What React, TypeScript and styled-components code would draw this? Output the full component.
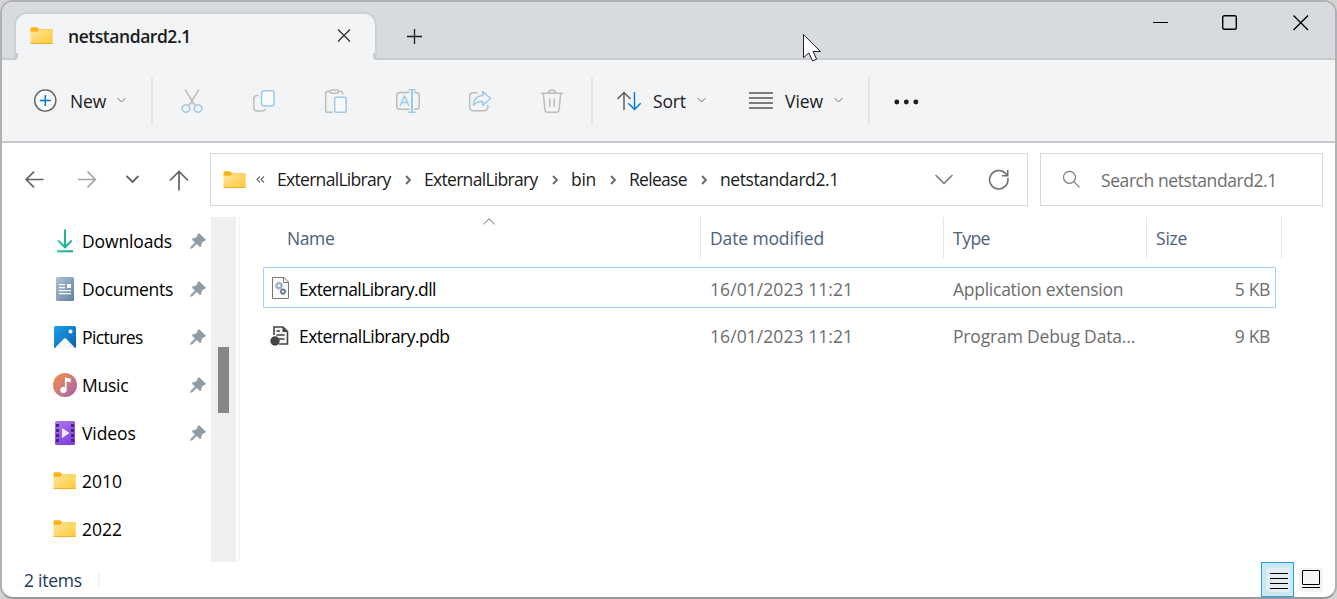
import React from 'react';
import styled, { createGlobalStyle } from 'styled-components';

const GlobalStyle = createGlobalStyle`
  * {
    box-sizing: border-box;
  }

  body {
    margin: 0;
    overflow: hidden;
    background: #d4d4d4;
    font-family: 'Open Sans', 'Noto Sans', sans-serif;
    font-size: 17.5px;
    color: #1b1b1b;
  }

  svg {
    display: block;
    flex: none;
  }
`;

const places = [
  { name: 'Downloads', icon: 'downloads', track: -0.13, pinned: true },
  { name: 'Documents', icon: 'documents', track: -0.3, pinned: true },
  { name: 'Pictures', icon: 'pictures', track: -0.6, pinned: true },
  { name: 'Music', icon: 'music', track: -0.25, pinned: true },
  { name: 'Videos', icon: 'videos', track: -0.1, pinned: true },
  { name: '2010', icon: 'folder', track: 0, pinned: false },
  { name: '2022', icon: 'folder', track: 0, pinned: false },
];

const crumbs = [
  { name: 'ExternalLibrary', width: 147, track: -0.7 },
  { name: 'ExternalLibrary', width: 147, track: -0.7 },
  { name: 'bin', width: 58, track: -0.3 },
  { name: 'Release', width: 91, track: -0.7 },
  { name: 'netstandard2.1', width: 0, track: -0.43 },
];

const files = [
  {
    name: 'ExternalLibrary.dll',
    nameTrack: -0.6,
    icon: 'dll',
    date: '16/01/2023 11:21',
    type: 'Application extension',
    typeTrack: -0.26,
    size: '5 KB',
    focused: true,
  },
  {
    name: 'ExternalLibrary.pdb',
    nameTrack: -0.54,
    icon: 'pdb',
    date: '16/01/2023 11:21',
    type: 'Program Debug Data...',
    typeTrack: -0.16,
    size: '9 KB',
    focused: false,
  },
];

function FolderIcon() {
  return (
    <svg width="24" height="18" viewBox="0 0 24 18">
      <defs>
        <linearGradient id="folder" x1="0" y1="0" x2="1" y2="1">
          <stop offset="0" stopColor="#ffe69b" />
          <stop offset="1" stopColor="#ffc937" />
        </linearGradient>
      </defs>
      <path d="M.5 1.2Q.5.3 1.4.3H7l2 1.9h13.6v3H.5z" fill="#f9b517" />
      <path d="M.5 4.7H7.3L9.4 2.6H22.7V17H.5z" fill="url(#folder)" />
      <path d="M.5 16.3H22.7V17.1H.5z" fill="#e8a821" />
    </svg>
  );
}

function PlaceIcon({ kind }: { kind: string }) {
  if (kind === 'downloads') {
    return (
      <svg width="24" height="24" viewBox="0 0 24 24" fill="none">
        <defs>
          <linearGradient id="down" x1="0" y1="0" x2="1" y2="1">
            <stop offset="0" stopColor="#3ccf91" />
            <stop offset="1" stopColor="#0f9d9b" />
          </linearGradient>
        </defs>
        <path d="M11 .5h2v18h-2z" fill="#22b393" />
        <path d="M5.2 11.5L12 18.3l6.8-6.8" stroke="url(#down)" strokeWidth="2" />
        <path d="M4 21.3h16v1.9H4z" fill="url(#down)" />
      </svg>
    );
  }
  if (kind === 'documents') {
    return (
      <svg width="24" height="24" viewBox="0 0 24 24">
        <defs>
          <linearGradient id="doc" x1="0" y1="0" x2="1" y2="1">
            <stop offset="0" stopColor="#afc3da" />
            <stop offset="1" stopColor="#607f9f" />
          </linearGradient>
        </defs>
        <rect x="3" y="0" width="18" height="24" rx="1.5" fill="url(#doc)" />
        <path
          d="M6 7h6v1.3H6zM6 10h6v1.3H6zM14 7h4v4h-4zM6 13h12v1.3H6zM6 16h12v1.3H6z"
          fill="#fff"
        />
      </svg>
    );
  }
  if (kind === 'pictures') {
    return (
      <svg width="24" height="24" viewBox="0 0 24 24">
        <defs>
          <linearGradient id="pic" x1="0" y1="0" x2="1" y2="1">
            <stop offset="0" stopColor="#1ba0e4" />
            <stop offset="1" stopColor="#0a5fb4" />
          </linearGradient>
        </defs>
        <rect x="1" y="1" width="22" height="22" rx="1.5" fill="url(#pic)" />
        <path d="M2.5 22.3L11 13.6q1-.9 2 0L21.5 22.3q-.5.7-1 .7H3.5q-.6 0-1-.7z" fill="#f3f8fd" />
        <circle cx="17.5" cy="6.5" r="2" fill="#fff" />
      </svg>
    );
  }
  if (kind === 'music') {
    return (
      <svg width="24" height="24" viewBox="0 0 24 24">
        <defs>
          <linearGradient id="mus" x1="0.1" y1="0.1" x2="0.9" y2="0.9">
            <stop offset="0" stopColor="#f08d50" />
            <stop offset="1" stopColor="#a865a4" />
          </linearGradient>
        </defs>
        <circle cx="12" cy="12" r="12" fill="url(#mus)" />
        <path d="M11.9 4.2l5.8 1.6v3.6l-4.1-1.1v8.7a3.2 3.2 0 1 1-1.7-2.8z" fill="#fff" />
      </svg>
    );
  }
  if (kind === 'videos') {
    return (
      <svg width="24" height="24" viewBox="0 0 24 24">
        <defs>
          <linearGradient id="vid" x1="0" y1="0" x2="0.5" y2="1">
            <stop offset="0" stopColor="#b175f3" />
            <stop offset="1" stopColor="#8543de" />
          </linearGradient>
        </defs>
        <rect x="2" y="0" width="20" height="24" rx="1.5" fill="url(#vid)" />
        <path
          d="M3 3h3v3H3zM3 8h3v3H3zM3 13h3v3H3zM3 18h3v3H3zM18 3h3v3h-3zM18 8h3v3h-3zM18 13h3v3h-3zM18 18h3v3h-3z"
          fill="#46258a"
        />
        <path d="M9 7l7.5 5L9 17z" fill="#f4ecfd" />
      </svg>
    );
  }
  return <FolderIcon />;
}

function PinIcon() {
  return (
    <svg width="16" height="17" viewBox="0 0 16 17">
      <path
        d="M7.9.7q1-.9 1.9 0l5.6 5.6q.8.9-.3 1.4L12 9.2 11 13.4q-.3 1.1-1.2.4L6.7 11.1 2 15.6.2 15.800.5 14.100 5 9.500 2.300 6.900q-.7-.9.4-1.300L6.500 4.200z"
        fill="#919ba3"
      />
    </svg>
  );
}

function Chevron({ width, color, weight = 1 }: { width: number; color: string; weight?: number }) {
  return (
    <svg width={width} height={width / 2 + 2} viewBox={`0 0 ${width} ${width / 2 + 2}`}>
      <path
        d={`M.5 1L${width / 2} ${width / 2 + 0.5}L${width - 0.5} 1`}
        fill="none"
        stroke={color}
        strokeWidth={weight}
      />
    </svg>
  );
}

function CommandIcon({ kind }: { kind: string }) {
  const grey = '#bcbcbc';
  const blue = '#9ccaeb';
  return (
    <svg width="24" height="24" viewBox="0 0 24 24" fill="none" strokeWidth="1.5">
      {kind === 'cut' && (
        <>
          <path d="M5 .5l10 16M19 .5L9 16.5" stroke={grey} />
          <circle cx="6" cy="19.5" r="3.8" stroke={blue} />
          <circle cx="18" cy="19.5" r="3.8" stroke={blue} />
        </>
      )}
      {kind === 'copy' && (
        <>
          <path
            d="M6.5 6.5H5A3.3 3.3 0 0 0 1.7 9.8V18.6A3.3 3.3 0 0 0 5 21.9H10.5Q13 21.9 13.8 20"
            stroke={grey}
          />
          <rect x="9.5" y="1.8" width="12.6" height="15.3" rx="2.8" stroke={blue} fill="#f8fafc" />
        </>
      )}
      {kind === 'paste' && (
        <>
          <path
            d="M6 2.6H3.2A1.5 1.5 0 0 0 1.7 4.1V21.8A1.5 1.5 0 0 0 3.2 23.3H8.5M14 2.6H17.4A1.5 1.5 0 0 1 18.6 4V5.5"
            stroke={grey}
          />
          <rect x="6" y="1" width="8.5" height="3.2" rx="1.6" stroke={grey} />
          <rect x="10.7" y="8.3" width="11.5" height="15" rx="1.5" stroke={blue} fill="#f8fafc" />
        </>
      )}
      {kind === 'rename' && (
        <>
          <path
            d="M13.5 3.6H4A3.3 3.3 0 0 0 .8 6.9V16.9A3.3 3.3 0 0 0 4 20.2H13.5M18 3.6H20A3.3 3.3 0 0 1 23.2 6.9V16.9A3.3 3.3 0 0 1 20 20.2H18"
            stroke={grey}
          />
          <path d="M4.2 16.8L8.2 7.2h.6l4 9.6M5.6 13.5h5.8" stroke={blue} />
          <path d="M12.3.8h7.4M12.3 23.2h7.4" stroke={blue} />
          <path d="M16 .8v22.4" stroke={blue} strokeWidth="2" />
        </>
      )}
      {kind === 'share' && (
        <>
          <path
            d="M9.5 3.7H5A3.3 3.3 0 0 0 1.7 7V18.5A3.3 3.3 0 0 0 5 21.8H16.5A3.3 3.3 0 0 0 19.8 18.5V16"
            stroke={grey}
          />
          <path
            d="M14.7 2.6L22.7 9.5L14.7 16.4V12.5Q8.7 12.3 5.5 16.2Q5.8 7.3 14.7 6.5z"
            stroke={blue}
            strokeLinejoin="round"
          />
        </>
      )}
      {kind === 'delete' && (
        <path
          d="M1 4.3h22M8.6 4A3.4 2.9 0 0 1 15.4 4M3.3 4.5L5 21A2.3 2.3 0 0 0 7.3 23.2H16.7A2.3 2.3 0 0 0 19 21L20.7 4.5M9.7 9.5V18M14.3 9.5V18"
          stroke={grey}
        />
      )}
    </svg>
  );
}

function FileIcon({ kind }: { kind: string }) {
  if (kind === 'dll') {
    return (
      <svg width="24" height="24" viewBox="0 0 24 24">
        <path d="M4.5 1.5H16L20.5 6V22.5H4.5z" fill="#fafafa" stroke="#777" />
        <path d="M15.5 1.5V6.5H20.5" fill="none" stroke="#777" />
        <circle cx="11" cy="9.7" r="2.4" fill="none" stroke="#9fb0c3" strokeWidth="2" />
        <circle cx="11" cy="9.7" r="3.5" fill="none" stroke="#9fb0c3" strokeDasharray="1.4 1.35" />
        <circle cx="15" cy="15.6" r="2" fill="none" stroke="#66758a" strokeWidth="1.6" />
        <circle cx="15" cy="15.6" r="2.9" fill="none" stroke="#66758a" strokeWidth=".8" strokeDasharray="1.2 1.08" />
      </svg>
    );
  }
  return (
    <svg width="24" height="24" viewBox="0 0 24 24">
      <path d="M6 12V4H15L19.5 8.5V21H11" fill="#f3f3f3" stroke="#444" strokeWidth="1.6" />
      <path d="M14.5 4V9H19.5z" fill="#444" />
      <path d="M8.5 8h3.5M8.5 12h8M10.5 16h6" stroke="#444" strokeWidth="1.5" />
      <circle cx="7" cy="18" r="4.7" fill="#444" />
    </svg>
  );
}

function App() {
  return (
    <>
      <GlobalStyle />
      <Window>
        <TitleBar>
          <Tab>
            <FolderIcon />
            <TabTitle $track={-0.45}>netstandard2.1</TabTitle>
            <svg width="14" height="14" viewBox="0 0 14 14">
              <path d="M1 .5L13 12.5M13 .5L1 12.5" stroke="#2a2a2a" strokeWidth="1.2" />
            </svg>
          </Tab>
          <NewTab>
            <svg width="15" height="15" viewBox="0 0 15 15">
              <path d="M7.5 0V15M0 7.5H15" stroke="#1b1b1b" strokeWidth="1.3" />
            </svg>
          </NewTab>
          <WindowButtons>
            <svg width="16" height="16" viewBox="0 0 16 16">
              <path d="M0 7.5H15" stroke="#000" />
            </svg>
            <svg width="16" height="16" viewBox="0 0 16 16" overflow="visible">
              <rect x="-.3" y=".7" width="13.6" height="13.6" rx="1.5" fill="none" stroke="#000" strokeWidth="1.4" />
            </svg>
            <svg width="16" height="16" viewBox="0 0 16 16">
              <path d="M.5.5L15 15M15 .5L.5 15" stroke="#000" strokeWidth="1.4" />
            </svg>
          </WindowButtons>
        </TitleBar>

        <CommandBar>
          <MenuButton $width={118}>
            <svg width="24" height="24" viewBox="0 0 24 24">
              <circle cx="12.3" cy="11.5" r="10.6" fill="#fafbfc" stroke="#5a5a5a" strokeWidth="1.3" />
              <path d="M12.3 6V17M6.8 11.5H17.8" stroke="#0078d4" strokeWidth="1.5" />
            </svg>
            <MenuLabel $gap={13} $width={47} $track={-0.1}>New</MenuLabel>
            <Chevron width={9} color="#747474" />
          </MenuButton>
          <Divider />
          <Commands>
            {['cut', 'copy', 'paste', 'rename', 'share', 'delete'].map((kind) => (
              <CommandIcon key={kind} kind={kind} />
            ))}
          </Commands>
          <Divider />
          <SortViewGroup>
            <MenuButton $width={132}>
              <svg width="26" height="20" viewBox="0 0 26 20" fill="none" strokeWidth="1.4">
                <path d="M7 19V1.5M.5 8L7 1.5L13.5 8" stroke="#555" />
                <path d="M17.5 1V18.5M11.3 12.3L17.5 18.5L23.7 12.3" stroke="#0078d4" />
              </svg>
              <MenuLabel $gap={10} $width={44} $track={-0.15}>Sort</MenuLabel>
              <Chevron width={9} color="#747474" />
            </MenuButton>
            <MenuButton $width={119}>
              <svg width="24" height="17" viewBox="0 0 24 17">
                <path d="M0 1H24M0 6H24M0 11H24M0 16H24" stroke="#555" strokeWidth="1.3" />
              </svg>
              <MenuLabel $gap={12} $width={49} $track={-0.05}>View</MenuLabel>
              <Chevron width={9} color="#747474" />
            </MenuButton>
          </SortViewGroup>
          <Divider />
          <More>
            <svg width="25" height="6" viewBox="0 0 25 6" fill="#1b1b1b">
              <circle cx="2.8" cy="3" r="2.4" />
              <circle cx="12.3" cy="3" r="2.4" />
              <circle cx="21.8" cy="3" r="2.4" />
            </svg>
          </More>
        </CommandBar>

        <NavBar>
          <NavButtons>
            <svg width="20" height="20" viewBox="0 0 20 20" fill="none" stroke="#636363" strokeWidth="1.7">
              <path d="M18.5 9.5H1.5M9 1.7L1.2 9.5L9 17.3" />
            </svg>
            <svg width="20" height="20" viewBox="0 0 20 20" fill="none" stroke="#a6a6a6" strokeWidth="1.7" overflow="visible">
              <path d="M3 9.5H20M12.5 1.7L20.3 9.5L12.5 17.3" />
            </svg>
            <Chevron width={13} color="#636363" weight={1.8} />
            <svg width="20" height="22" viewBox="0 0 20 22" fill="none" stroke="#636363" strokeWidth="1.7">
              <path d="M10 21.5V3M1 11.5L10 2.5L19 11.5" />
            </svg>
          </NavButtons>
          <AddressBox>
            <FolderIcon />
            <Overflow>
              <svg width="9" height="9" viewBox="0 0 9 9" fill="none" stroke="#666" strokeWidth="1.1">
                <path d="M4 1.5L1 4.5L4 7.5M8 1.5L5 4.5L8 7.5" />
              </svg>
            </Overflow>
            {crumbs.map((crumb, i) => (
              <Crumb key={i} $width={crumb.width}>
                <CrumbName $track={crumb.track}>{crumb.name}</CrumbName>
                {crumb.width > 0 && (
                  <svg width="7" height="10" viewBox="0 0 7 10">
                    <path d="M1 1L5 5L1 9" fill="none" stroke="#666" strokeWidth="1.8" />
                  </svg>
                )}
              </Crumb>
            ))}
            <AddressTools>
              <Chevron width={18} color="#777" weight={1.5} />
              <svg width="22" height="22" viewBox="0 0 22 22" fill="none" stroke="#707070" strokeWidth="1.6">
                <path d="M19.8 9A9.2 9.2 0 1 1 17.5 4.5L19.5 6.5M19.7 1V6.7H14" />
              </svg>
            </AddressTools>
          </AddressBox>
          <SearchBox>
            <svg width="18" height="20" viewBox="0 0 18 20" fill="none" stroke="#777c86" strokeWidth="1.2">
              <circle cx="7.5" cy="7.3" r="6" />
              <path d="M11.8 11.6L17.5 17.3" />
            </svg>
            <Text $track={-0.42}>Search netstandard2.1</Text>
          </SearchBox>
        </NavBar>

        <Body>
          <Places>
            {places.map((place) => (
              <Place key={place.name}>
                <PlaceIcon kind={place.icon} />
                <PlaceName $track={place.track}>{place.name}</PlaceName>
                {place.pinned && <PinIcon />}
              </Place>
            ))}
          </Places>
          <ScrollTrack>
            <ScrollThumb />
          </ScrollTrack>
          <FileList>
            <HeaderRow>
              <HeaderCell>
                <Text $track={-0.4}>Name</Text>
                <SortMark>
                  <svg width="12" height="7" viewBox="0 0 12 7">
                    <path d="M.5 6.2L6 .8L11.5 6.2" fill="none" stroke="#666" />
                  </svg>
                </SortMark>
              </HeaderCell>
              <HeaderCell>
                <Text $track={-0.13}>Date modified</Text>
              </HeaderCell>
              <HeaderCell>
                <Text $track={-0.5}>Type</Text>
              </HeaderCell>
              <HeaderCell>
                <Text $track={-0.2}>Size</Text>
              </HeaderCell>
            </HeaderRow>
            {files.map((file) => (
              <FileRow key={file.name} $focused={file.focused}>
                <FileName>
                  <FileIcon kind={file.icon} />
                  <FileTitle $track={file.nameTrack}>{file.name}</FileTitle>
                </FileName>
                <FileCell>
                  <Text $track={0.07}>{file.date}</Text>
                </FileCell>
                <FileCell>
                  <Text $track={file.typeTrack}>{file.type}</Text>
                </FileCell>
                <FileCell $right>
                  <Text $track={-0.35}>{file.size}</Text>
                </FileCell>
              </FileRow>
            ))}
          </FileList>
        </Body>

        <StatusBar>
          <Count>
            <Text $track={-0.25}>2 items</Text>
          </Count>
          <ViewButton $active>
            <svg width="24" height="24" viewBox="0 0 24 24">
              <rect width="24" height="24" rx="3" fill="#e4edf3" />
              <path d="M4 5.5H22M4 10.5H22M4 15.5H22M4 20.5H22" stroke="#000" />
            </svg>
          </ViewButton>
          <ViewButton>
            <svg width="24" height="24" viewBox="0 0 24 24">
              <rect width="24" height="24" rx="3" fill="#f3f3f3" />
              <rect x="3.5" y="2.5" width="17" height="14" rx=".5" fill="#f6f6f6" stroke="#000" />
              <path d="M3 19.5H21" stroke="#000" />
            </svg>
          </ViewButton>
        </StatusBar>
      </Window>
      <Pointer>
        <svg width="20" height="29" viewBox="0 0 20 29">
          <path
            d="M.5.6V23.7L5.9 18.9L9.5 26.9L13.6 25.2L10.1 17.5H17.5z"
            fill="#fff"
            stroke="#1d1d2b"
          />
        </svg>
      </Pointer>
    </>
  );
}

const Window = styled.div`
  width: 1337px;
  height: 599px;
  display: flex;
  flex-direction: column;
  border: 2px solid #b1b1b1;
  border-bottom-color: #999;
  border-radius: 13px;
  background: #fff;
  overflow: hidden;
  white-space: nowrap;
`;

const Text = styled.span<{ $track: number }>`
  letter-spacing: ${({ $track }) => $track}px;
`;

const TitleBar = styled.div`
  height: 58px;
  flex: none;
  display: flex;
  padding-left: 12px;
  background: #d7dadf;
  box-shadow: inset 0 -2px #c9cbd0;
`;

const Tab = styled.div`
  position: relative;
  width: 363px;
  height: 48px;
  margin-top: 10px;
  padding: 0 24px 2px 14px;
  display: flex;
  align-items: center;
  border: 2px solid #cccfd5;
  border-bottom: 0;
  border-radius: 13px 13px 0 0;
  background: #f3f4f6;

  /* flared feet where the tab meets the command bar */
  &::before,
  &::after {
    content: '';
    position: absolute;
    bottom: 0;
    width: 5px;
    height: 5px;
    border-bottom: 2px solid #c9cbd0;
  }

  &::before {
    left: -5px;
    border-right: 2px solid #c9cbd0;
    border-bottom-right-radius: 4px;
    box-shadow: 1px 1px #f3f4f6;
  }

  &::after {
    right: -5px;
    border-left: 2px solid #c9cbd0;
    border-bottom-left-radius: 4px;
    box-shadow: -1px 1px #f3f4f6;
  }
`;

const TabTitle = styled(Text)`
  flex: 1;
  padding-left: 14px;
  font-weight: 600;
`;

const NewTab = styled.div`
  padding: 27px 0 0 30px;
`;

const WindowButtons = styled.div`
  display: flex;
  gap: 54px;
  margin-left: auto;
  padding: 13px 26px 0 0;
`;

const CommandBar = styled.div`
  height: 83px;
  flex: none;
  display: flex;
  align-items: center;
  padding-left: 31px;
  background: #f3f4f6;
  border-bottom: 2px solid #c6c8cc;
`;

const MenuButton = styled.div<{ $width: number }>`
  width: ${({ $width }) => $width}px;
  flex: none;
  display: flex;
  align-items: center;
`;

const MenuLabel = styled(Text)<{ $gap: number; $width: number }>`
  width: ${({ $width }) => $width}px;
  margin-left: ${({ $gap }) => $gap}px;
  padding-top: 1px;
`;

const Divider = styled.div`
  width: 2px;
  height: 48px;
  flex: none;
  background: #e5e6e8;
`;

const Commands = styled.div`
  width: 438px;
  flex: none;
  padding: 0 27px;
  display: flex;
  justify-content: space-between;
`;

const SortViewGroup = styled.div`
  display: flex;
  padding-left: 24px;
`;

const More = styled.div`
  padding: 2px 0 0 24px;
`;

const NavBar = styled.div`
  height: 74px;
  flex: none;
  display: flex;
  align-items: flex-start;
  padding: 10px 12px 0 23px;
`;

const NavButtons = styled.div`
  width: 185px;
  height: 53px;
  display: flex;
  align-items: center;
  justify-content: space-between;
  padding-right: 21px;
`;

const AddressBox = styled.div`
  width: 818px;
  height: 53px;
  display: flex;
  align-items: center;
  padding: 0 17px 0 12px;
  border: 1px solid #d9d9d9;
`;

const Overflow = styled.div`
  width: 30px;
  padding-left: 9px;
`;

const Crumb = styled.div<{ $width: number }>`
  width: ${({ $width }) => ($width ? `${$width}px` : 'auto')};
  display: flex;
  align-items: center;
  justify-content: space-between;
  padding-right: ${({ $width }) => ($width ? 12 : 0)}px;
`;

const CrumbName = styled(Text)`
  padding-bottom: 1px;
`;

const AddressTools = styled.div`
  display: flex;
  align-items: center;
  gap: 35px;
  margin-left: auto;
`;

const SearchBox = styled.div`
  width: 283px;
  height: 53px;
  margin-left: 12px;
  padding-left: 21px;
  display: flex;
  align-items: center;
  gap: 21px;
  border: 1px solid #d9d9d9;
  color: #6d6d6d;
`;

const Body = styled.div`
  height: 345px;
  flex: none;
  display: flex;
`;

const Places = styled.div`
  width: 209px;
  padding: 0 5px 0 51px;
  color: #000;
`;

const Place = styled.div`
  height: 48px;
  display: flex;
  align-items: center;
`;

const PlaceName = styled(Text)`
  flex: 1;
  padding-left: 5px;
`;

const ScrollTrack = styled.div`
  width: 25px;
  padding: 130px 0 0 7px;
  background: #efefef;
`;

const ScrollThumb = styled.div`
  width: 11px;
  height: 66px;
  background: #868686;
`;

const FileList = styled.div`
  flex: 1;
  margin-left: 2px;
  padding-left: 23px;
  border-left: 2px solid #f6f6f6;
`;

const HeaderRow = styled.div`
  height: 41px;
  margin-bottom: 9px;
  display: grid;
  grid-template-columns: 438px 243px 203px 135px;
  grid-template-rows: 41px;
  color: #4c607a;
`;

const HeaderCell = styled.div`
  position: relative;
  padding-left: 9px;
  line-height: 43px;
  border-right: 1px solid #e5e5e5;

  &:first-child {
    padding-left: 24px;
  }
`;

const SortMark = styled.div`
  position: absolute;
  top: 1px;
  left: 220px;
`;

const FileRow = styled.div<{ $focused: boolean }>`
  width: 1013px;
  height: 41px;
  margin-bottom: 6px;
  display: grid;
  grid-template-columns: 438px 243px 203px 1fr;
  align-items: center;
  border: 1px solid ${({ $focused }) => ($focused ? '#99d1ff' : 'transparent')};
  border-radius: 1px;
`;

const FileName = styled.div`
  display: flex;
  align-items: center;
  gap: 7px;
  padding-left: 4px;
  color: #000;
`;

const FileTitle = styled(Text)`
  padding-top: 2px;
`;

const FileCell = styled.div<{ $right?: boolean }>`
  padding: 2px 5px 0 8px;
  text-align: ${({ $right }) => ($right ? 'right' : 'left')};
  color: #6d6d6d;
`;

const StatusBar = styled.div`
  height: 35px;
  flex: none;
  display: flex;
  padding: 0 8px 0 22px;
`;

const Count = styled.div`
  width: 76px;
  height: 18px;
  margin: 9px auto 0 0;
  line-height: 19px;
  border-right: 2px solid #f3f3f3;
  color: #1e395b;
`;

const ViewButton = styled.div<{ $active?: boolean }>`
  width: 33px;
  height: 35px;
  display: flex;
  align-items: center;
  justify-content: center;
  border: 1px solid ${({ $active }) => ($active ? '#26a0da' : 'transparent')};
  background: ${({ $active }) => ($active ? '#cbe8f6' : 'none')};
`;

const Pointer = styled.div`
  position: absolute;
  left: 803px;
  top: 34px;
`;

export default App;
